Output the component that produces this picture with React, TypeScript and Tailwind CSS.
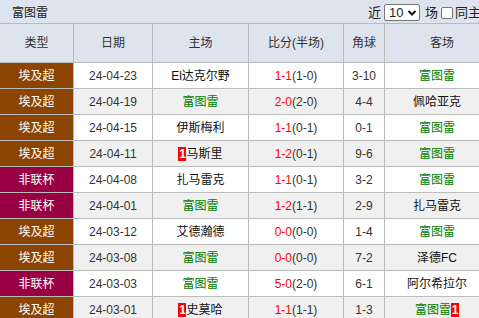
import React from "react";

type Match = {
  type: "埃及超" | "非联杯";
  date: string;
  home: string;
  homeRed?: string;
  score: string;
  half: string;
  corner: string;
  away: string;
  awayRed?: string;
};

const TEAM = "富图雷";

const matches: Match[] = [
  { type: "埃及超", date: "24-04-23", home: "El达克尔野", score: "1-1", half: "(1-0)", corner: "3-10", away: TEAM },
  { type: "埃及超", date: "24-04-19", home: TEAM, score: "2-0", half: "(2-0)", corner: "4-4", away: "佩哈亚克" },
  { type: "埃及超", date: "24-04-15", home: "伊斯梅利", score: "1-1", half: "(0-1)", corner: "0-1", away: TEAM },
  { type: "埃及超", date: "24-04-11", home: "马斯里", homeRed: "1", score: "1-2", half: "(0-1)", corner: "9-6", away: TEAM },
  { type: "非联杯", date: "24-04-08", home: "扎马雷克", score: "1-1", half: "(0-1)", corner: "3-2", away: TEAM },
  { type: "非联杯", date: "24-04-01", home: TEAM, score: "1-2", half: "(1-1)", corner: "2-9", away: "扎马雷克" },
  { type: "埃及超", date: "24-03-12", home: "艾德瀚德", score: "0-0", half: "(0-0)", corner: "1-4", away: TEAM },
  { type: "埃及超", date: "24-03-08", home: TEAM, score: "0-0", half: "(0-0)", corner: "7-2", away: "泽德FC" },
  { type: "非联杯", date: "24-03-03", home: TEAM, score: "5-0", half: "(2-0)", corner: "6-1", away: "阿尔希拉尔" },
  { type: "埃及超", date: "24-03-01", home: "史莫哈", homeRed: "1", score: "1-1", half: "(1-1)", corner: "1-3", away: TEAM, awayRed: "1" },
];

const cell = "h-[26px] border-r border-b border-[#bbbbbb] flex items-center justify-center";

function RedCard({ n }: { n: string }) {
  return (
    <span className="inline-flex items-center justify-center w-[8px] h-[14px] bg-[#ff0000] text-white font-bold text-[12px] leading-none">
      {n}
    </span>
  );
}

function Team({ name, red, after }: { name: string; red?: string; after?: boolean }) {
  const color = name === TEAM ? "text-[#008000]" : "text-[#111111]";
  return (
    <span className="inline-flex items-center">
      {red && !after && <RedCard n={red} />}
      <span className={color}>{name}</span>
      {red && after && <RedCard n={red} />}
    </span>
  );
}

export default function App() {
  return (
    <div
      className="w-[479px] h-[318px] overflow-hidden bg-white text-[12px] text-[#333333]"
      style={{ fontFamily: '"Liberation Sans", Arial, "Noto Sans CJK SC", sans-serif' }}
    >
      <div className="w-[500px]">
        {/* Title bar */}
        <div className="h-[24px] bg-[#dde4ee] border-b border-[#bbbbbb] flex items-center justify-between pl-[12px] pt-[2px]">
          <span className="text-[12px] text-[#222222]">富图雷</span>
          <div className="flex items-center text-[13px] text-[#222222] w-[132px]">
            <span>近</span>
            <div className="ml-[3px] w-[36px] h-[17px] bg-white border border-[#767676] rounded-[2px] flex items-center justify-between pl-[4px] pr-[2px]">
              <span className="text-[13px] leading-none">10</span>
              <svg width="10" height="8" viewBox="0 0 10 8">
                <path d="M1.5 2 L5 5.5 L8.5 2" fill="none" stroke="#111" strokeWidth="2" />
              </svg>
            </div>
            <span className="ml-[5px]">场</span>
            <span className="ml-[3px] w-[12px] h-[12px] bg-white border border-[#767676] rounded-[2px]" />
            <span className="ml-[2px]">同主</span>
          </div>
        </div>

        {/* Table */}
        <div className="grid grid-cols-[74px_79px_96px_95px_41px_115px]">
          {["类型", "日期", "主场", "比分(半场)", "角球", "客场"].map((h) => (
            <div key={h} className="h-[39px] bg-[#dde4ee] border-r border-b border-[#bbbbbb] flex items-center justify-center text-[#333333]">
              {h}
            </div>
          ))}

          {matches.map((m, i) => {
            const bg = i % 2 === 0 ? "bg-white" : "bg-[#f0f0f0]";
            return (
              <React.Fragment key={m.date}>
                <div className={`${cell} text-white ${m.type === "埃及超" ? "bg-[#8b4500]" : "bg-[#990044]"}`}>
                  {m.type}
                </div>
                <div className={`${cell} ${bg}`}>{m.date}</div>
                <div className={`${cell} ${bg}`}>
                  <Team name={m.home} red={m.homeRed} />
                </div>
                <div className={`${cell} ${bg}`}>
                  <span className="text-[#ff0000]">{m.score}</span>
                  <span>{m.half}</span>
                </div>
                <div className={`${cell} ${bg}`}>{m.corner}</div>
                <div className={`${cell} ${bg} pr-[10px]`}>
                  <Team name={m.away} red={m.awayRed} after />
                </div>
              </React.Fragment>
            );
          })}
        </div>
      </div>
    </div>
  );
}
